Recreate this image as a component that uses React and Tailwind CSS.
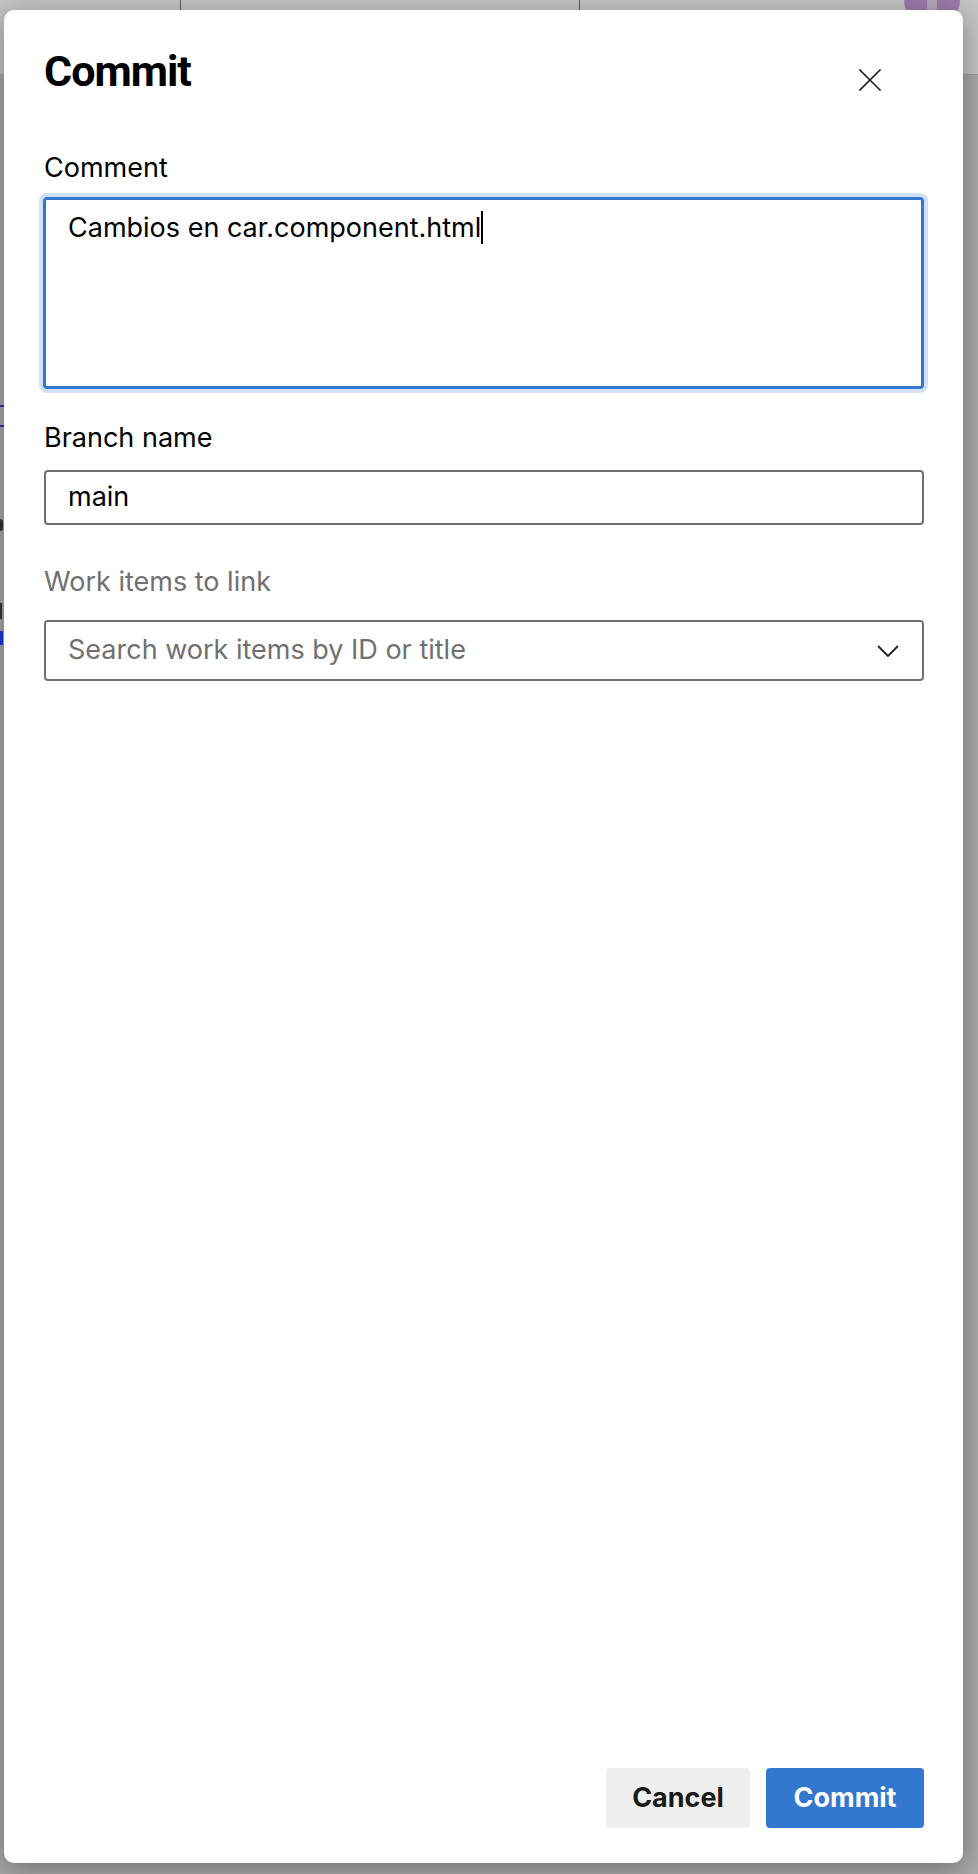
const FONT = { fontFamily: 'Inter, "Noto Sans", sans-serif' };

function Field({ label, muted, children }) {
  return (
    <div className="flex flex-col">
      <label className={`text-[27px] leading-[36px] ${muted ? 'text-[#707070]' : 'text-black'}`}>{label}</label>
      {children}
    </div>
  );
}

export default function App() {
  return (
    <div className="relative w-[978px] h-[1874px] overflow-hidden bg-[#a9a9a9]" style={FONT}>
      {/* page behind the overlay */}
      <div className="h-[75px] bg-[#c4c4c4] border-b border-[#9d9d9d] flex">
        <div className="w-[181px] border-r border-[#5c5c5c]" />
        <div className="w-[399px] border-r border-[#5c5c5c]" />
        <div className="flex-1 flex justify-end pr-[18px]">
          <div className="w-[56px] h-[56px] -mt-[28px] rounded-full bg-[#9c7bab] flex justify-center">
            <div className="w-[10px] h-full bg-[#b5a7bb]" />
          </div>
        </div>
      </div>
      <div className="flex flex-col items-start pt-[330px]">
        <div className="w-[4px] h-[2px] bg-[#1e3ad6]" />
        <div className="w-[4px] h-[2px] bg-[#1e3ad6] mt-[18px]" />
        <div className="w-[3px] h-[12px] bg-[#333] mt-[92px] rounded-r-full" />
        <div className="w-[2px] h-[16px] bg-[#333] mt-[72px]" />
        <div className="w-[3px] h-[14px] bg-[#1e3ad6] mt-[12px]" />
      </div>

      {/* dialog */}
      <div className="absolute left-[4px] top-[10px] w-[959px] h-[1853px] bg-white rounded-[10px] shadow-[0_6px_28px_rgba(0,0,0,0.35)] flex flex-col pl-[40px] pr-[39px] pt-[37px] pb-[35px]">
        <div className="flex items-start justify-between">
          <h1 className="text-[43px] leading-[48px] font-bold tracking-[-1px] text-black" style={{ fontFamily: 'Roboto, sans-serif' }}>Commit</h1>
          <button className="mt-[22px] mr-[43px] text-[#222]">
            <svg width="22" height="22" viewBox="0 0 22 22" fill="none" stroke="currentColor" strokeWidth="1.6" strokeLinecap="square">
              <path d="M1 1L21 21M21 1L1 21" />
            </svg>
          </button>
        </div>

        <div className="mt-[55px]">
          <Field label="Comment">
            <div className="mt-[11px] -ml-[1px] h-[192px] rounded-[4px] border-[3px] border-[#3277d0] shadow-[0_0_0_4px_#d3e0f5] pl-[22px] pt-[10px] text-[27px] leading-[36px] text-black">
              Cambios en car.component.html<span className="inline-block w-[2px] h-[33px] bg-black align-[-7px]" />
            </div>
          </Field>
        </div>

        <div className="mt-[31px]">
          <Field label="Branch name">
            <div className="mt-[14px] h-[55px] rounded-[4px] border-2 border-[#6f6f6f] pl-[22px] flex items-center text-[27px] text-black">
              main
            </div>
          </Field>
        </div>

        <div className="mt-[39px]">
          <Field label="Work items to link" muted>
            <div className="mt-[20px] h-[61px] rounded-[4px] border-2 border-[#6f6f6f] pl-[22px] pr-[23px] flex items-center justify-between text-[27px] text-[#707070]">
              <span>Search work items by ID or title</span>
              <svg width="22" height="12" viewBox="0 0 22 12" fill="none" stroke="#222" strokeWidth="1.8" strokeLinejoin="miter">
                <path d="M1 1L11 11L21 1" />
              </svg>
            </div>
          </Field>
        </div>

        <div className="mt-auto flex justify-end gap-[16px]">
          <button className="w-[144px] h-[60px] rounded-[4px] bg-[#efefef] text-[27px] font-bold text-[#1a1a1a]">Cancel</button>
          <button className="w-[158px] h-[60px] rounded-[4px] bg-[#3477cf] text-[27px] font-bold text-white">Commit</button>
        </div>
      </div>
    </div>
  );
}
